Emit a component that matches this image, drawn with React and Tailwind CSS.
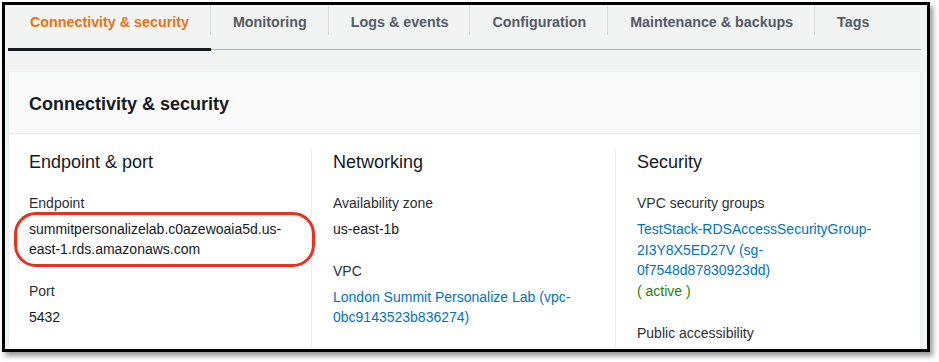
import React from 'react';

const tabs = [
  'Connectivity & security',
  'Monitoring',
  'Logs & events',
  'Configuration',
  'Maintenance & backups',
  'Tags',
];

const Field = ({ label, children, className = '', leading = 'leading-[20px]' }) => (
  <div className={className}>
    <div className="text-[14px] leading-[20px] text-[#2b3036]">{label}</div>
    {children && (
      <div className={`mt-[6px] text-[14px] ${leading} text-[#16191f]`}>{children}</div>
    )}
  </div>
);

const App = () => {
  return (
    <div
      className="relative w-[939px] h-[362px] bg-white overflow-hidden"
      style={{ fontFamily: '"Liberation Sans", Arial, sans-serif' }}
    >
      {/* framed screenshot */}
      <div className="ml-[2px] mt-[2px] w-[928px] h-[350px] border-[3px] border-black bg-[#f2f3f3] overflow-hidden shadow-[3px_4px_5px_rgba(0,0,0,0.4)] pl-[3px] pr-[6px]">
        {/* Tabs */}
        <div className="flex h-[45px] border-b border-[#aab7b8]">
          {tabs.map((t, i) => (
            <div key={t} className="relative h-full px-[22px] pt-[5px]">
              <span
                className={`text-[14.3px] leading-[20px] font-bold whitespace-nowrap ${
                  i === 0 ? 'text-[#ec7211]' : 'text-[#545b64]'
                }`}
              >
                {t}
              </span>
              {i < tabs.length - 1 && (
                <span className="absolute right-0 top-[1px] h-[29px] w-px bg-[#d5dbdb]" />
              )}
              {i === 0 && (
                <span className="absolute left-0 right-0 bottom-[-2px] h-[3px] bg-[#16191f]" />
              )}
            </div>
          ))}
        </div>

        {/* Panel */}
        <div className="mt-[21px] border border-[#eaeded] bg-white">
          <div className="h-[62px] bg-[#fafafa] border-b border-[#eaeded] px-[20px] pt-[20px]">
            <h2 className="text-[18px] leading-[24px] font-bold text-[#16191f]">
              Connectivity &amp; security
            </h2>
          </div>
          <div className="flex pt-[16px] pl-[20px] h-[220px]">
            <div className="w-[282px] pt-[1px]">
              <h3 className="text-[18px] leading-[22px] text-[#16191f]">Endpoint &amp; port</h3>
              <Field label="Endpoint" className="mt-[20px]">
                summitpersonalizelab.c0azewoaia5d.us-east-1.rds.amazonaws.com
              </Field>
              <Field label="Port" className="mt-[22px]">
                5432
              </Field>
            </div>
            <div className="w-[304px] border-l border-[#eaeded] pl-[21px] pr-[8px] pt-[1px]">
              <h3 className="text-[18px] leading-[22px] text-[#16191f]">Networking</h3>
              <Field label="Availability zone" className="mt-[20px]">
                us-east-1b
              </Field>
              <Field label="VPC" className="mt-[22px]">
                <span className="text-[#0073bb]">
                  London Summit Personalize Lab (vpc-0bc9143523b836274)
                </span>
              </Field>
            </div>
            <div className="flex-1 border-l border-[#eaeded] pl-[21px] pr-[30px] pt-[1px]">
              <h3 className="text-[18px] leading-[22px] text-[#16191f]">Security</h3>
              <Field label="VPC security groups" className="mt-[20px]" leading="leading-[20.7px]">
                <span className="text-[#0073bb]">
                  TestStack-RDSAccessSecurityGroup-2I3Y8X5ED27V (sg-0f7548d87830923dd)
                </span>
                <div className="text-[#1d8102]">( active )</div>
              </Field>
              <Field label="Public accessibility" className="mt-[21px]" />
            </div>
          </div>
        </div>
      </div>

      {/* red annotation around endpoint */}
      <div className="absolute left-[14px] top-[212px] w-[301px] h-[55px] border-[3px] border-[#e8321f] rounded-[22px]" />
    </div>
  );
};

export default App;
